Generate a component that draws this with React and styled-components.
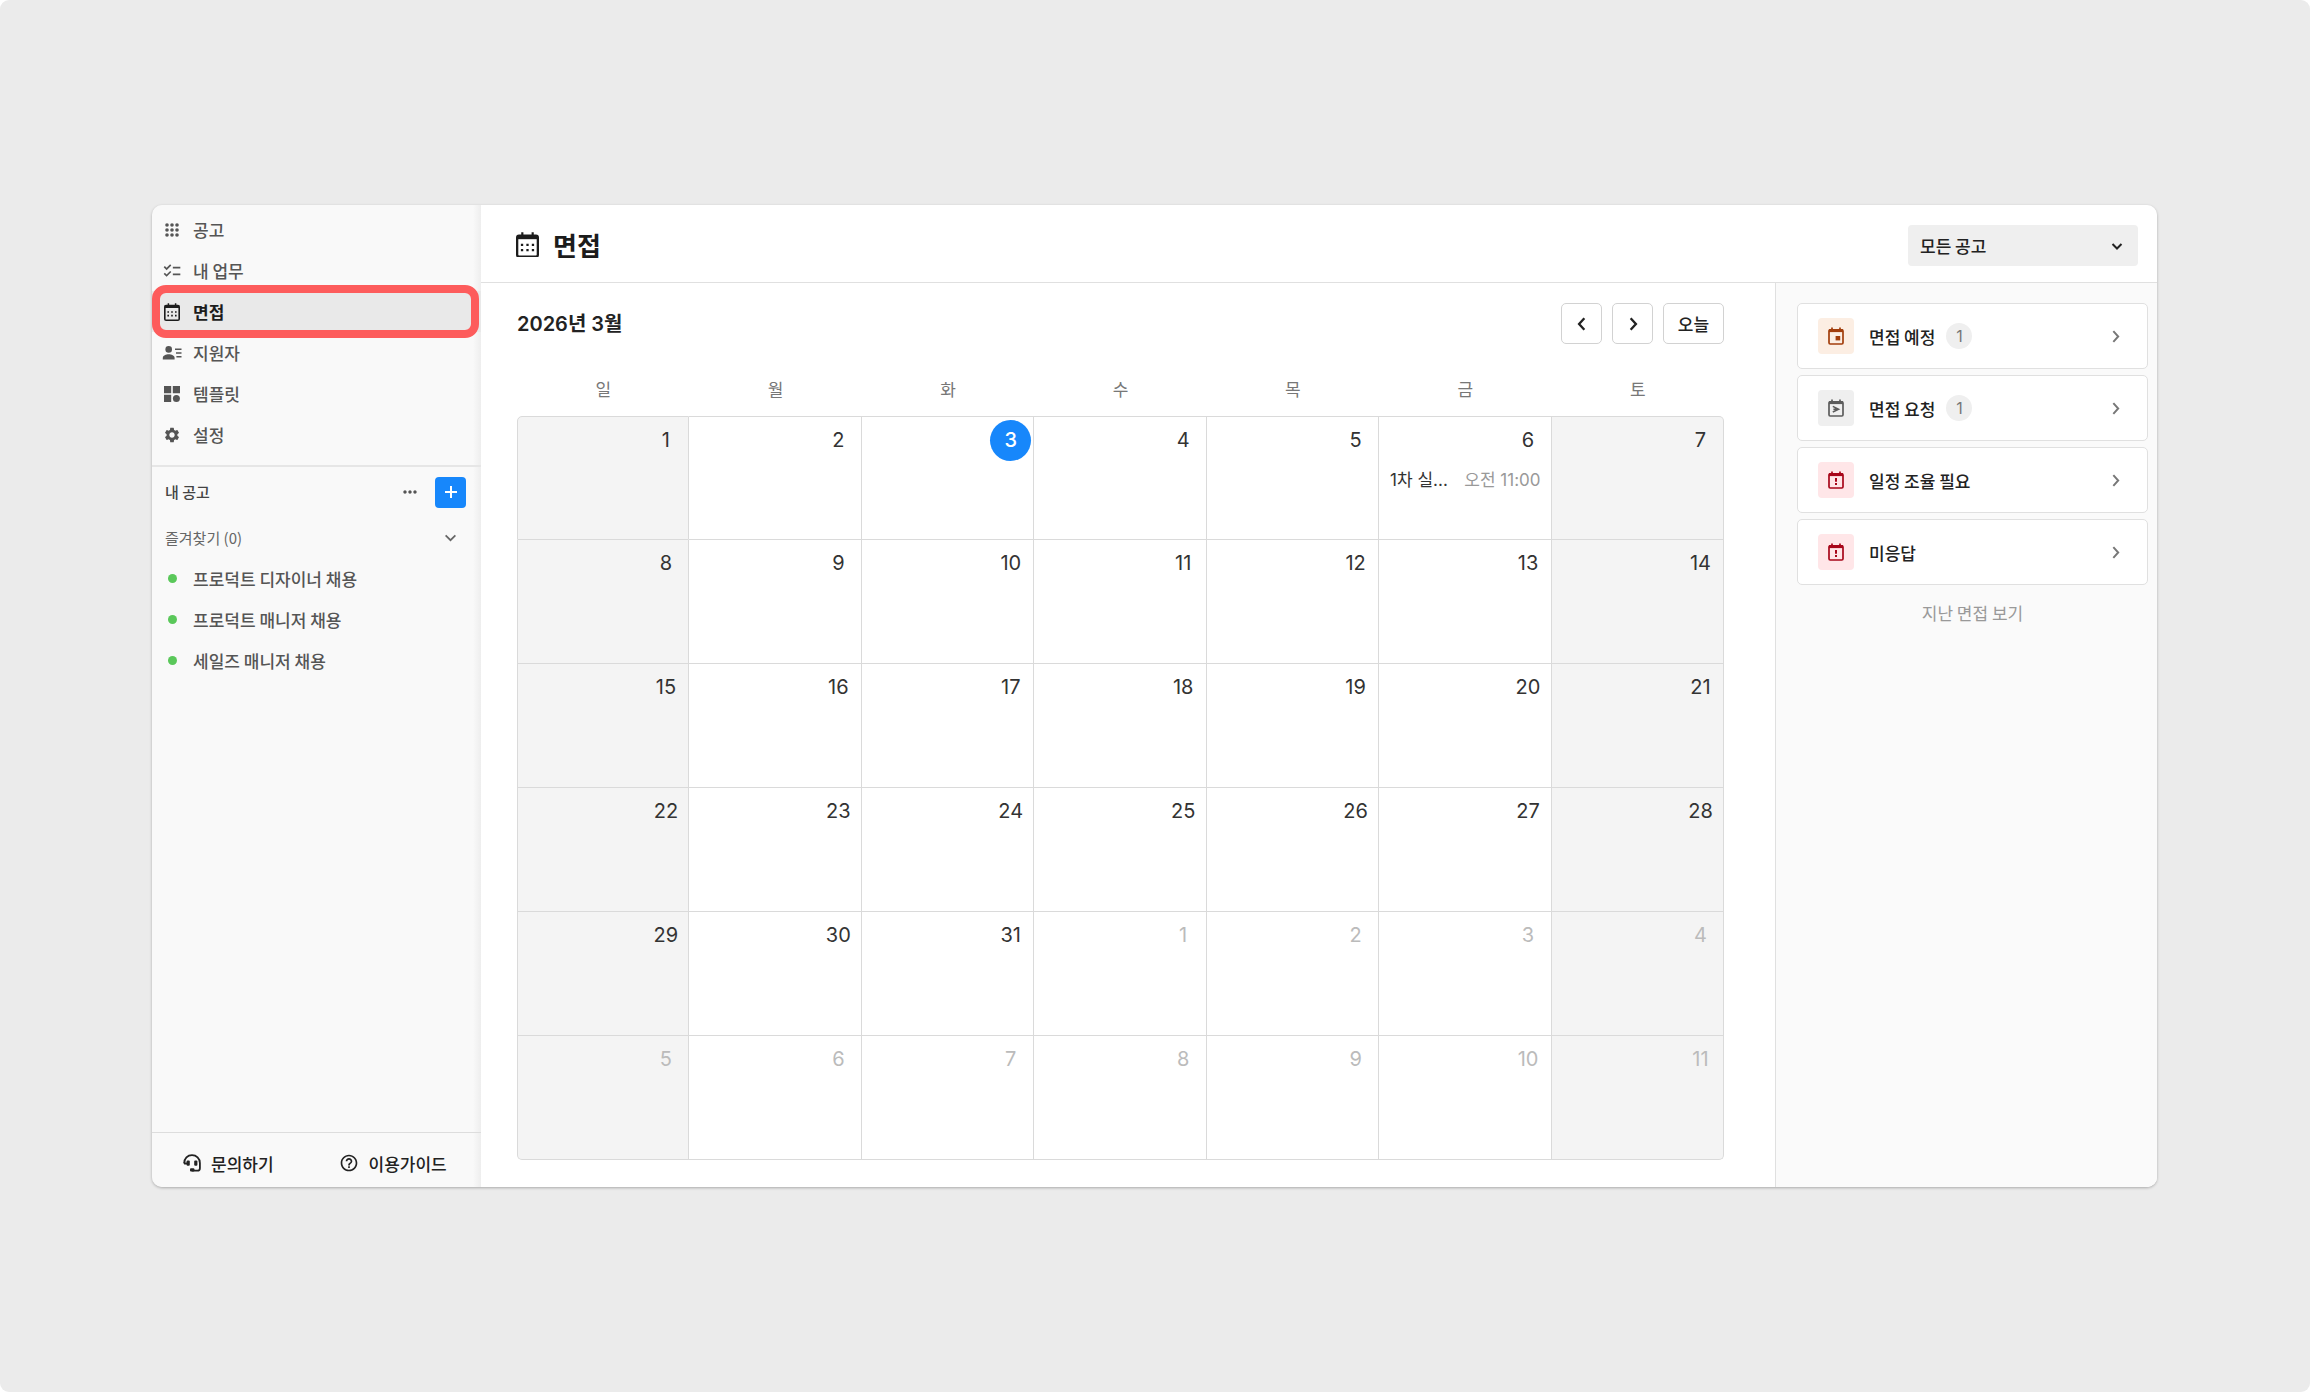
import React from 'react';
import styled, { createGlobalStyle, css } from 'styled-components';
import { MdChecklist, MdSettings, MdHelpOutline, MdMoreHoriz } from 'react-icons/md';

const kr = `'Noto Sans CJK KR', sans-serif`;
const mixed = `Inter, 'Noto Sans CJK KR', sans-serif`;

const CalendarIcon = ({ size = 16 }) => (
  <svg width={size} height={(size * 9) / 8} viewBox="0 0 16 18" fill="none" aria-hidden="true">
    <path d="M4.4 .2v2.4M11.6 .2v2.4" stroke="currentColor" strokeWidth="1.5" />
    <rect x=".8" y="2.6" width="14.4" height="14.6" rx="1.3" stroke="currentColor" strokeWidth="1.6" />
    <path d="M.8 3.6h14.4" stroke="currentColor" strokeWidth="2.8" />
    <path
      d="M3.4 9H5M7.2 9h1.6M11 9h1.6M3.4 12.6H5M7.2 12.6h1.6M11 12.6h1.6"
      stroke="currentColor"
      strokeWidth="1.6"
    />
  </svg>
);

const GridIcon = () => (
  <svg width="14" height="14" viewBox="0 0 14 14" fill="currentColor" aria-hidden="true">
    {[2, 7, 12].map((y) => [2, 7, 12].map((x) => <circle key={`${x}-${y}`} cx={x} cy={y} r="1.8" />))}
  </svg>
);

const PersonIcon = () => (
  <svg width="20" height="16" viewBox="0 0 20 16" fill="currentColor" aria-hidden="true">
    <circle cx="6.7" cy="4.4" r="3.3" />
    <path d="M.8 14.5v-1.6c0-2.4 3.2-3.7 5.9-3.7s5.9 1.3 5.9 3.7v1.6z" />
    <path d="M13 3.5h6.5v1.6H13zM14 7.2h5.5v1.6H14zM14.4 10.9h5.1v1.6h-5.1z" />
  </svg>
);

const TemplateIcon = () => (
  <svg width="16" height="16" viewBox="0 0 16 16" fill="currentColor" aria-hidden="true">
    <path d="M0 0h7.2v7.2H0zM8.8 0H16v7.2H8.8zM0 8.8h7.2V16H0z" />
    <circle cx="12.4" cy="12.4" r="3.5" />
  </svg>
);

const HeadsetIcon = () => (
  <svg width="18" height="18" viewBox="0 0 18 18" fill="none" aria-hidden="true">
    <path
      d="M1.2 9.3C1.2 4.4 4.6 1.2 9 1.2s7.9 3.2 7.9 7.8v5.2c0 1.5-1 2.5-2.4 2.5H8.8"
      stroke="currentColor"
      strokeWidth="1.8"
    />
    <rect x="3.6" y="6.6" width="3.2" height="5.2" rx="1" fill="currentColor" />
    <rect x="11.2" y="6.6" width="3.2" height="5.2" rx="1" fill="currentColor" />
    <path d="M.4 8.4h4v2H1.2z" fill="currentColor" />
    <rect x="7" y="14.2" width="4.4" height="3.4" rx="1" fill="currentColor" />
  </svg>
);

const statusMarks = {
  planned: <path d="M7.6 9h4.6v4.4H7.6z" fill="currentColor" />,
  requested: <path d="M4.8 7.4l5.8 2.8-5.8 2.8M5.4 10.2h4" stroke="currentColor" strokeWidth="1.5" />,
  alert: <path d="M8 7v3.8M8 12v1.9" stroke="currentColor" strokeWidth="2" />,
};

const StatusIcon = ({ type }) => (
  <svg width="16" height="18" viewBox="0 0 16 18" fill="none" aria-hidden="true">
    <path d="M4 .4v2.4M12 .4v2.4" stroke="currentColor" strokeWidth="1.7" />
    <rect x="1" y="2.8" width="14" height="14.2" rx="1.2" stroke="currentColor" strokeWidth="1.7" />
    <path d="M1 3.6h14" stroke="currentColor" strokeWidth="3" />
    {statusMarks[type]}
  </svg>
);

const arrows = {
  down: 'M1.5 4l4.5 4.5L10.5 4',
  left: 'M8 1L3.5 6L8 11',
  right: 'M4 1l4.5 5L4 11',
};

const Arrow = ({ to, size = 12, width = 2 }) => (
  <svg width={size} height={size} viewBox="0 0 12 12" fill="none" aria-hidden="true">
    <path d={arrows[to]} stroke="currentColor" strokeWidth={width} />
  </svg>
);

const menu = [
  { label: '공고', icon: <GridIcon /> },
  { label: '내 업무', icon: <MdChecklist size={20} /> },
  { label: '면접', icon: <CalendarIcon size={16} />, active: true },
  { label: '지원자', icon: <PersonIcon /> },
  { label: '템플릿', icon: <TemplateIcon /> },
  { label: '설정', icon: <MdSettings size={18} /> },
];

const jobs = ['프로덕트 디자이너 채용', '프로덕트 매니저 채용', '세일즈 매니저 채용'];

const statuses = [
  { label: '면접 예정', type: 'planned', count: 1, color: '#a23e0c', bg: '#fceee3' },
  { label: '면접 요청', type: 'requested', count: 1, color: '#5c5c5c', bg: '#efefef' },
  { label: '일정 조율 필요', type: 'alert', color: '#a8071a', bg: '#ffe6e8' },
  { label: '미응답', type: 'alert', color: '#a8071a', bg: '#ffe6e8' },
];

const weekdays = ['일', '월', '화', '수', '목', '금', '토'];

// March has 31 days and starts on a Sunday, the rest of the grid is April
const weeks = Array.from({ length: 6 }, (_, week) =>
  Array.from({ length: 7 }, (_, day) => {
    const n = week * 7 + day + 1;
    return { day: n > 31 ? n - 31 : n, outside: n > 31, today: n === 3, event: n === 6 };
  })
);

const App = () => {
  return (
    <>
      <GlobalStyle />
      <Page>
        <Window>
          <Sidebar>
            <Menu>
              {menu.map(({ label, icon, active }) => (
                <MenuLink href="#" key={label} $active={active}>
                  <IconSlot>{icon}</IconSlot>
                  {label}
                </MenuLink>
              ))}
            </Menu>
            <Jobs>
              <JobsHeader>
                <h2>내 공고</h2>
                <MoreButton type="button" aria-label="더보기">
                  <MdMoreHoriz size={20} />
                </MoreButton>
                <AddButton type="button" aria-label="공고 추가">
                  <svg width="14" height="14" viewBox="0 0 14 14" aria-hidden="true">
                    <path d="M7 1v12M1 7h12" stroke="currentColor" strokeWidth="2" />
                  </svg>
                </AddButton>
              </JobsHeader>
              <Favorites type="button">
                즐겨찾기 (0)
                <Arrow to="down" size={13} width={1.6} />
              </Favorites>
              {jobs.map((job) => (
                <MenuLink href="#" key={job}>
                  <IconSlot>
                    <Dot />
                  </IconSlot>
                  {job}
                </MenuLink>
              ))}
            </Jobs>
            <Footer>
              <a href="#">
                <HeadsetIcon />
                문의하기
              </a>
              <a href="#">
                <MdHelpOutline size={20} />
                이용가이드
              </a>
            </Footer>
          </Sidebar>

          <Main>
            <Header>
              <h1>
                <CalendarIcon size={23} />
                면접
              </h1>
              <SelectBox>
                <select aria-label="공고 선택" defaultValue="all">
                  <option value="all">모든 공고</option>
                </select>
                <Arrow to="down" />
              </SelectBox>
            </Header>
            <Body>
              <CalendarSection>
                <Toolbar>
                  <h2>2026년 3월</h2>
                  <ToolButton type="button" aria-label="이전 달">
                    <Arrow to="left" size={14} />
                  </ToolButton>
                  <ToolButton type="button" aria-label="다음 달">
                    <Arrow to="right" size={14} />
                  </ToolButton>
                  <ToolButton type="button" $wide>
                    오늘
                  </ToolButton>
                </Toolbar>
                <Calendar>
                  <thead>
                    <tr>
                      {weekdays.map((day) => (
                        <th key={day} scope="col">
                          {day}
                        </th>
                      ))}
                    </tr>
                  </thead>
                  <tbody>
                    {weeks.map((week, i) => (
                      <tr key={i}>
                        {week.map(({ day, outside, today, event }) => (
                          <td key={day}>
                            <DayNumber $outside={outside} $today={today}>
                              {day}
                            </DayNumber>
                            {event && (
                              <Event>
                                <span>1차 실...</span>
                                <time>오전 11:00</time>
                              </Event>
                            )}
                          </td>
                        ))}
                      </tr>
                    ))}
                  </tbody>
                </Calendar>
              </CalendarSection>
              <Aside>
                {statuses.map(({ label, type, count, color, bg }) => (
                  <StatusCard type="button" key={label}>
                    <Tile $color={color} $bg={bg}>
                      <StatusIcon type={type} />
                    </Tile>
                    <span>{label}</span>
                    {count && <Count>{count}</Count>}
                    <Arrow to="right" size={13} width={1.8} />
                  </StatusCard>
                ))}
                <PastLink href="#">지난 면접 보기</PastLink>
              </Aside>
            </Body>
          </Main>
        </Window>
      </Page>
    </>
  );
};

const GlobalStyle = createGlobalStyle`
  * {
    box-sizing: border-box;
  }

  body {
    margin: 0;
    background: #fff;
    font-family: ${kr};
    color: #222;
  }

  h1, h2 {
    margin: 0;
  }

  a {
    color: inherit;
    text-decoration: none;
  }

  button, select {
    font-family: inherit;
    color: inherit;
    cursor: pointer;
  }
`;

const Page = styled.div`
  display: flex;
  min-height: 100vh;
  padding: 205px 153px 205px 152px;
  border-radius: 9px;
  background: #ebebeb;
`;

const Window = styled.div`
  display: flex;
  flex: 1;
  border-radius: 10px;
  box-shadow: 0 1px 3px rgba(0, 0, 0, 0.28);
`;

const Sidebar = styled.aside`
  display: flex;
  flex-direction: column;
  width: 329px;
  border-radius: 10px 0 0 10px;
  background: linear-gradient(to left, #eeeeee, #f9f9f9 8px);
`;

const Menu = styled.nav`
  padding: 4px 0 10px;
  border-bottom: 2px solid #e6e6e6;
`;

const MenuLink = styled.a`
  display: flex;
  align-items: center;
  height: 41px;
  padding-left: 8px;
  font-size: 17px;
  font-weight: 500;
  color: #555;

  ${({ $active }) =>
    $active &&
    css`
      position: relative;
      background: #e9e9e9;
      font-weight: 700;
      color: #1c1c1c;

      &::after {
        content: '';
        position: absolute;
        inset: -6px 2px -6px 0;
        border: 8px solid #fd5c5c;
        border-radius: 14px;
      }
    `}
`;

const IconSlot = styled.span`
  display: flex;
  align-items: center;
  justify-content: center;
  width: 24px;
  margin-right: 9px;
`;

const Dot = styled.span`
  width: 9px;
  height: 9px;
  border-radius: 50%;
  background: #5ac85a;
`;

const Jobs = styled.section`
  flex: 1;
`;

const JobsHeader = styled.div`
  display: flex;
  align-items: center;
  height: 50px;
  padding: 0 15px 0 13px;

  h2 {
    flex: 1;
    padding-bottom: 2px;
    font-size: 15px;
    font-weight: 500;
    color: #444;
  }
`;

const MoreButton = styled.button`
  display: flex;
  align-items: center;
  justify-content: center;
  width: 31px;
  height: 31px;
  margin-right: 10px;
  padding: 0;
  border: 0;
  background: none;
  color: #555;
`;

const AddButton = styled.button`
  display: flex;
  align-items: center;
  justify-content: center;
  width: 31px;
  height: 31px;
  padding: 0;
  border: 0;
  border-radius: 4px;
  background: #1787fb;
  color: #fff;
`;

const Favorites = styled.button`
  display: flex;
  align-items: center;
  justify-content: space-between;
  width: 100%;
  height: 41px;
  padding: 0 24px 0 13px;
  border: 0;
  background: none;
  font-size: 15px;
  color: #666;
`;

const Footer = styled.footer`
  display: flex;
  align-items: center;
  gap: 65px;
  height: 55px;
  padding: 6px 0 0 31px;
  border-top: 1px solid #ddd;

  a {
    display: flex;
    align-items: center;
    gap: 10px;
    font-size: 17px;
    font-weight: 500;
    color: #222;
  }
`;

const Main = styled.main`
  display: flex;
  flex: 1;
  flex-direction: column;
  min-width: 0;
  border-radius: 0 10px 10px 0;
  background: #fff;
`;

const Header = styled.header`
  display: flex;
  align-items: center;
  justify-content: space-between;
  height: 78px;
  padding: 4px 19px 0 35px;
  border-bottom: 1px solid #e0e0e0;

  h1 {
    display: flex;
    align-items: center;
    gap: 14px;
    padding-bottom: 2px;
    font-size: 26px;
    font-weight: 700;
    line-height: 36px;
    color: #1c1c1c;
  }
`;

const SelectBox = styled.div`
  display: grid;
  align-items: center;
  width: 230px;
  height: 41px;
  border-radius: 4px;
  background: #efefef;

  select {
    grid-area: 1 / 1;
    height: 100%;
    padding: 0 12px;
    border: 0;
    background: none;
    appearance: none;
    font-size: 17px;
    font-weight: 500;
  }

  svg {
    grid-area: 1 / 1;
    justify-self: end;
    margin-right: 15px;
    pointer-events: none;
  }
`;

const Body = styled.div`
  display: flex;
  flex: 1;
`;

const CalendarSection = styled.section`
  flex: 1;
  min-width: 0;
  padding: 20px 51px 27px 36px;
`;

const Toolbar = styled.div`
  display: flex;
  align-items: center;
  gap: 10px;
  margin-bottom: 20px;

  h2 {
    flex: 1;
    padding-bottom: 3px;
    font-family: ${mixed};
    font-size: 20px;
    font-weight: 600;
  }
`;

const ToolButton = styled.button`
  display: flex;
  align-items: center;
  justify-content: center;
  width: ${({ $wide }) => ($wide ? '61px' : '41px')};
  height: 41px;
  padding: 0;
  border: 1px solid #d2d2d2;
  border-radius: 5px;
  background: #fff;
  font-size: 17px;
  font-weight: 500;
`;

const Calendar = styled.table`
  width: 100%;
  table-layout: fixed;
  border-spacing: 0;

  th {
    height: 52px;
    padding: 0 0 3px;
    font-size: 17px;
    font-weight: 400;
    color: #777;
  }

  td {
    height: 124px;
    padding: 3px 2px;
    border: 1px solid #dadada;
    border-width: 0 1px 1px 0;
    vertical-align: top;
  }

  td:first-child {
    border-left-width: 1px;
  }

  td:first-child,
  td:last-child {
    background: #f4f4f4;
  }

  tbody tr:first-child td {
    border-top-width: 1px;
  }

  tbody tr:first-child td:first-child {
    border-top-left-radius: 5px;
  }

  tbody tr:first-child td:last-child {
    border-top-right-radius: 5px;
  }

  tbody tr:last-child td:first-child {
    border-bottom-left-radius: 5px;
  }

  tbody tr:last-child td:last-child {
    border-bottom-right-radius: 5px;
  }
`;

const DayNumber = styled.div`
  width: 41px;
  height: 41px;
  margin-left: auto;
  border-radius: 50%;
  background: ${({ $today }) => ($today ? '#1787fb' : 'none')};
  font-family: ${mixed};
  font-size: 20px;
  font-weight: ${({ $today }) => ($today ? 500 : 400)};
  line-height: 41px;
  text-align: center;
  color: ${({ $today, $outside }) => ($today ? '#fff' : $outside ? '#bbb' : '#333')};
`;

const Event = styled.div`
  display: flex;
  justify-content: space-between;
  padding: 7px 8px 0 9px;
  font-family: ${mixed};
  font-size: 17px;
  line-height: 24px;
  white-space: nowrap;
  color: #333;

  time {
    color: #999;
  }
`;

const Aside = styled.aside`
  display: flex;
  flex-direction: column;
  gap: 6px;
  width: 382px;
  padding: 20px 9px 20px 21px;
  border-left: 1px solid #e0e0e0;
  border-bottom-right-radius: 10px;
  background: #fafafa;
`;

const StatusCard = styled.button`
  display: flex;
  align-items: center;
  height: 66px;
  padding: 0 25px 0 20px;
  border: 1px solid #e0e0e0;
  border-radius: 5px;
  background: #fff;
  font-size: 17px;
  font-weight: 500;

  > svg {
    margin-left: auto;
    color: #777;
  }
`;

const Tile = styled.span`
  display: flex;
  align-items: center;
  justify-content: center;
  width: 36px;
  height: 36px;
  margin-right: 15px;
  border-radius: 4px;
  background: ${({ $bg }) => $bg};
  color: ${({ $color }) => $color};
`;

const Count = styled.span`
  width: 26px;
  height: 26px;
  margin-left: 11px;
  border-radius: 50%;
  background: #efefef;
  font-family: ${mixed};
  font-size: 16px;
  font-weight: 400;
  line-height: 26px;
  text-align: center;
  color: #777;
`;

const PastLink = styled.a`
  padding-top: 10px;
  font-size: 17px;
  line-height: 24px;
  text-align: center;
  color: #999;
`;

export default App;
